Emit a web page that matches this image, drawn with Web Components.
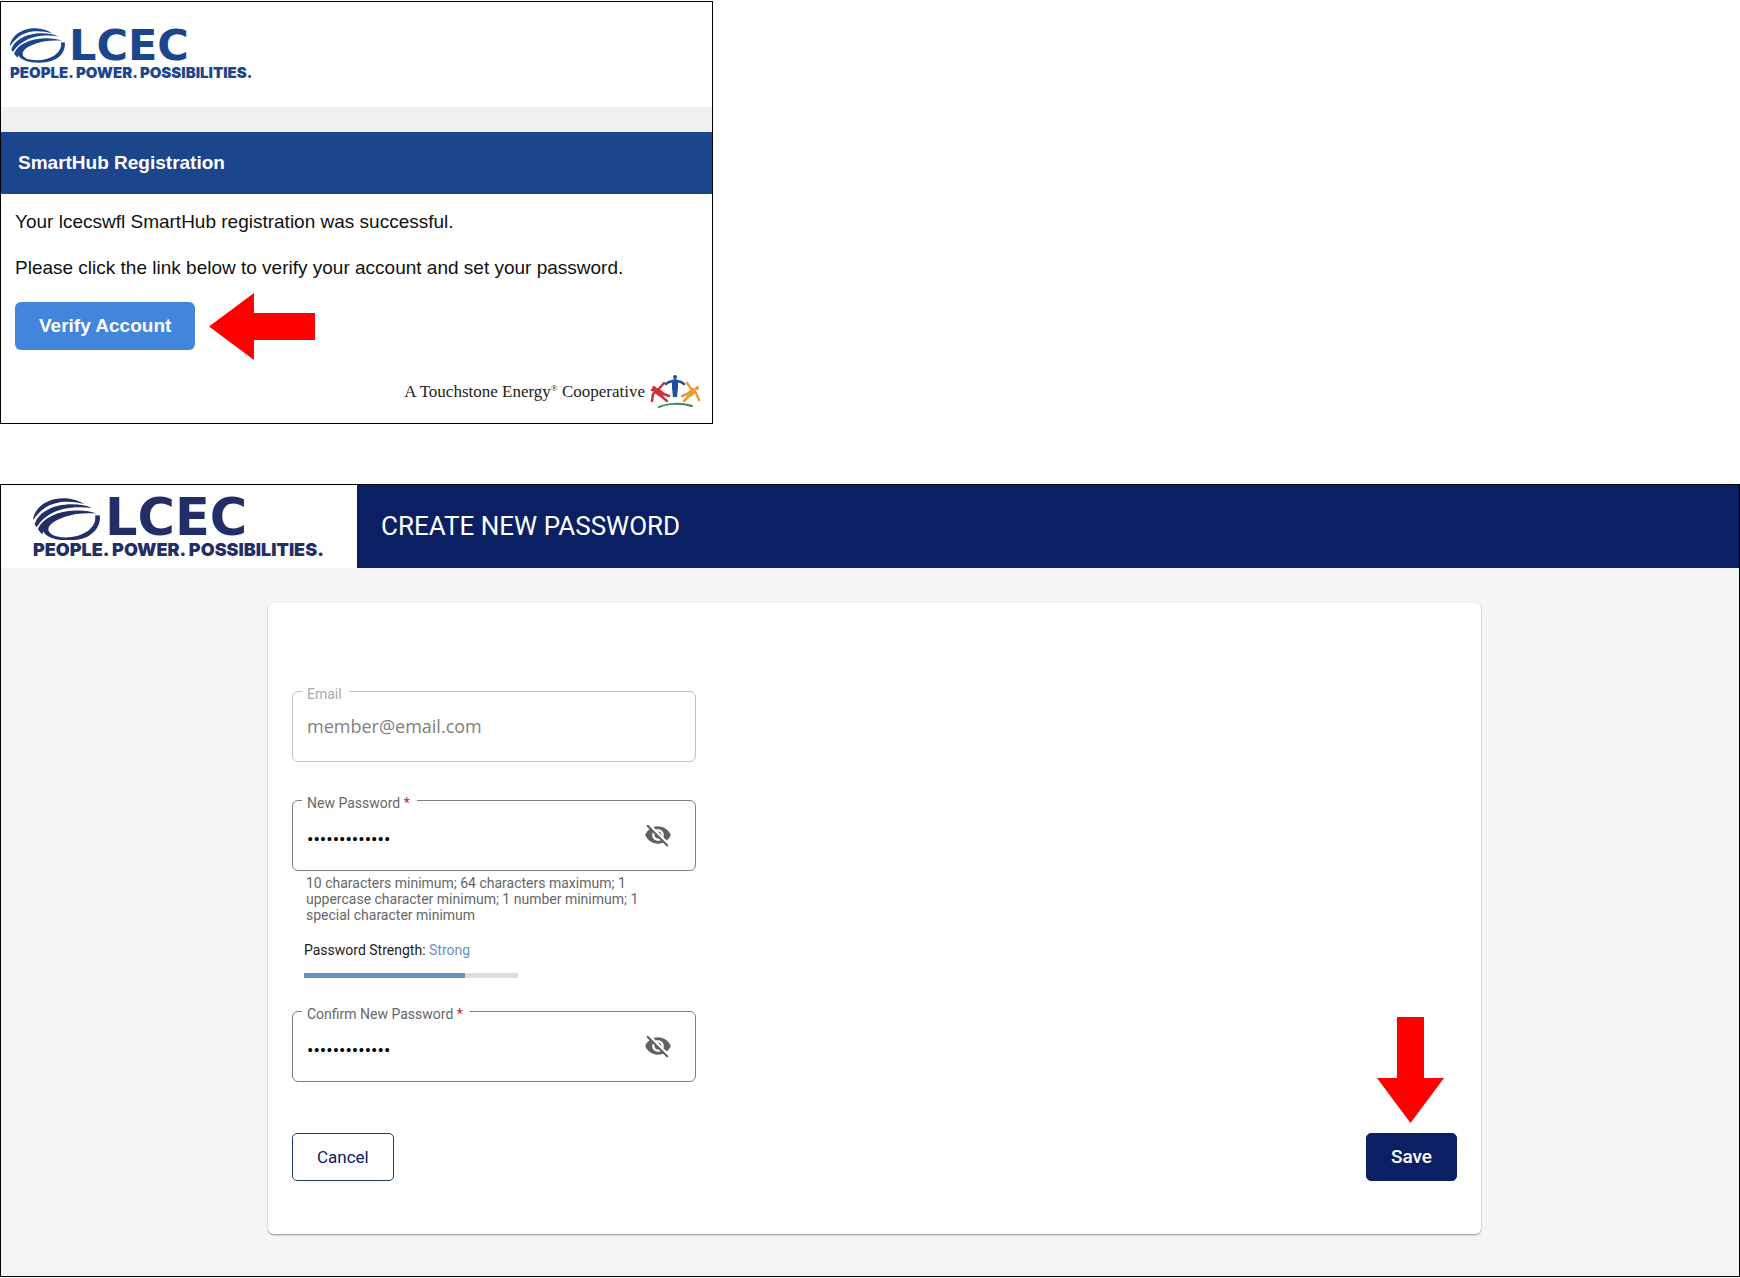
<!DOCTYPE html>
<html lang="en">
<head>
<meta charset="utf-8">
<title>SmartHub Registration</title>
<style>
  * { box-sizing: border-box; }
  body {
    margin: 0;
    padding: 1px 0;
    background: #fff;
    font-family: Roboto, "Liberation Sans", sans-serif;
  }
</style>
</head>
<body>
<smarthub-guide></smarthub-guide>

<script>
const define = (name, html, setup) => {
    const template = document.createElement("template");
    template.innerHTML = `<style>*, :host { box-sizing: border-box; }</style>${html}`;
    customElements.define(
        name,
        class extends HTMLElement {
            constructor() {
                super();
                this.attachShadow({ mode: "open" }).append(template.content.cloneNode(true));
            }
            connectedCallback() {
                if (setup) setup(this, this.shadowRoot);
            }
        }
    );
};

// size="large" is used in the page header, the default one in emails
define("lcec-logo", `
  <style>
    :host { display: block; color: #1c468b; --emblem: 55px; --letters: 43px; --line: 28px; --tag: 15px; --gap: 4px; }
    :host([size="large"]) { color: #232d66; --emblem: 67px; --letters: 51px; --line: 34px; --tag: 18px; --gap: 5px; }
    .mark { display: flex; align-items: flex-end; gap: var(--gap); }
    svg { display: block; width: var(--emblem); fill: currentColor; }
    .letters { font: bold var(--letters)/var(--line) "DejaVu Sans", sans-serif; padding-bottom: var(--gap); }
    .tag { font: 900 var(--tag)/20px Inter, "Liberation Sans", sans-serif; white-space: nowrap; }
  </style>
  <div class="mark">
    <svg viewBox="15 15 202 128" aria-hidden="true">
      <path d="M15 82C18 42 62 14 112 16C138 18 156 25 170 34C144 27 120 25 96 28C58 34 34 54 15 82Z"/>
      <path d="M20 95C30 58 76 34 132 34C158 34 178 38 192 45C162 41 132 42 106 48C70 57 42 76 26 103Z"/>
      <path d="M30 108C46 74 90 55 142 53C168 52 190 56 206 62C174 59 138 62 112 70C76 82 52 98 43 124C37 119 32 114 30 108Z"/>
      <path d="M202 68L216 67C220 92 206 117 180 131C148 147 92 147 62 131C44 121 40 106 48 93C66 76 104 66 140 64C108 71 76 83 64 100C56 114 66 126 88 131C118 138 154 132 178 116C196 103 206 86 202 68Z"/>
    </svg>
    <div class="letters">LCEC</div>
  </div>
  <div class="tag">PEOPLE. POWER. POSSIBILITIES.</div>
`);

define("callout-arrow", `
  <style>
    :host { display: block; width: 106px; height: 67px; }
    :host([direction="down"]) { width: 67px; height: 106px; }
    svg { display: block; width: 100%; height: 100%; fill: #f00; }
  </style>
  <svg aria-hidden="true"><path/></svg>
`, (host, root) => {
    const down = host.getAttribute("direction") === "down";
    root.querySelector("svg").setAttribute("viewBox", down ? "0 0 67 106" : "0 0 106 67");
    root.querySelector("path").setAttribute("d", down
        ? "M20 0H47V61H67L33.5 106L0 61H20Z"
        : "M106 20V47H45V67L0 33.5L45 0V20Z");
});

define("touchstone-mark", `
  <style>
    :host { display: flex; align-items: center; justify-content: flex-end; gap: 5px; color: #222; font: 17px/34px "Liberation Serif", serif; }
    sup { font-size: 9px; line-height: 0; vertical-align: 6px; }
    svg { display: block; width: 50px; height: 34px; fill: none; stroke-linecap: round; stroke-linejoin: round; }
  </style>
  <span>A Touchstone Energy<sup>®</sup> Cooperative</span>
  <svg viewBox="0 0 50 34" aria-hidden="true">
    <g stroke="#1f4f9c" stroke-width="2.500">
      <circle cx="25" cy="2" r="2" fill="#1f4f9c" stroke="none"/>
      <path d="M16 9C19 6 22 6 25 6C28 6 31 6 34 9"/>
      <path d="M25 7V13" stroke-width="6"/>
      <path d="M23.500 13L24 21M26.500 13L26 21"/>
    </g>
    <g stroke="#cb3340" stroke-width="2.500">
      <circle cx="4" cy="13" r="2" fill="#cb3340" stroke="none"/>
      <path d="M14 8L8 15L3 19L2 26"/>
      <path d="M7 16L11 19" stroke-width="6"/>
      <path d="M11 18L19 21M10 20L17 26M2 15L7 16"/>
    </g>
    <g stroke="#eb9b35" stroke-width="2.500">
      <circle cx="47" cy="13" r="2" fill="#eb9b35" stroke="none"/>
      <path d="M37 8L42 15L46 18L49 25"/>
      <path d="M43 16L40 19" stroke-width="6"/>
      <path d="M40 18L32 21M40 20L34 26"/>
    </g>
    <path d="M9 32C18 28 32 28 42 31" stroke="#35885a" stroke-width="2"/>
  </svg>
`);

define("email-message", `
  <style>
    :host { display: block; max-width: 713px; border: 1px solid #000; font: 19px/24px "Liberation Sans", Arial, sans-serif; color: #111; }
    .brand { padding: 26px 9px 24px; }
    .spacer { height: 25px; background: #f0f0f0; }
    h1 { margin: 0; padding: 19px 17px; background: #1c468b; color: #fff; font-size: 19px; line-height: 24px; }
    .body { padding: 16px 14px 0; }
    p { margin: 0 0 22px; }
    .action { display: flex; align-items: center; gap: 14px; margin-top: -9px; }
    a { display: block; padding: 12px 24px; border-radius: 6px; background: #4285db; color: #fff; font-weight: bold; text-decoration: none; white-space: nowrap; }
    footer { padding: 15px 12px 14px; }
  </style>
  <div class="brand"><lcec-logo></lcec-logo></div>
  <div class="spacer"></div>
  <h1>SmartHub Registration</h1>
  <div class="body">
    <p>Your lcecswfl SmartHub registration was successful.</p>
    <p>Please click the link below to verify your account and set your password.</p>
    <div class="action">
      <a href="#password">Verify Account</a>
      <callout-arrow direction="left"></callout-arrow>
    </div>
  </div>
  <footer><touchstone-mark></touchstone-mark></footer>
`);

define("outlined-field", `
  <style>
    :host { display: block; color: #666; --line: #808080; --value: #000; }
    :host([disabled]) { color: #aaa; --line: #c4c4c4; --value: #808080; }
    fieldset { min-width: 0; margin: 0; padding: 0 23px 10px 14px; border: 1px solid var(--line); border-radius: 6px; }
    legend { margin-left: -5px; padding: 4px 7px 0 5px; font-size: 14px; line-height: 16px; }
    .star { color: #c22; }
    .row { display: flex; align-items: center; height: 49px; }
    input { flex: 1; min-width: 0; height: 32px; padding: 0; border: 0; outline: 0; background: none; color: var(--value); font: 18px/32px "Open Sans", sans-serif; }
    input[type="password"] { padding-top: 8px; font: 19px/24px Roboto, sans-serif; }
    button { display: block; padding: 0; border: 0; background: none; color: #616161; cursor: pointer; }
    svg { display: block; width: 28px; height: 28px; fill: currentColor; }
  </style>
  <fieldset>
    <legend><label for="control"><slot></slot><span class="star"> *</span></label></legend>
    <div class="row">
      <input id="control">
      <button type="button" aria-label="Show password">
        <svg viewBox="0 0 24 24" aria-hidden="true"><path d="M12 7c2.760 0 5 2.240 5 5 0 .650-.130 1.260-.360 1.830l2.920 2.920c1.510-1.260 2.700-2.890 3.430-4.750-1.730-4.390-6-7.500-11-7.500-1.400 0-2.740.250-3.980.700l2.160 2.160C10.740 7.130 11.350 7 12 7zM2 4.270l2.280 2.280.460.460C3.080 8.300 1.780 10.020 1 12c1.730 4.390 6 7.500 11 7.500 1.550 0 3.030-.300 4.380-.840l.420.420L19.730 22 21 20.730 3.270 3 2 4.270zM7.530 9.800l1.550 1.550c-.050.210-.080.430-.080.650 0 1.660 1.340 3 3 3 .220 0 .440-.030.650-.080l1.550 1.550c-.670.330-1.410.530-2.200.530-2.760 0-5-2.240-5-5 0-.790.200-1.530.530-2.200zm4.310-.780l3.150 3.150.020-.160c0-1.660-1.340-3-3-3l-.170.010z"/></svg>
      </button>
    </div>
  </fieldset>
`, (host, root) => {
    const input = root.querySelector("input");
    const button = root.querySelector("button");
    const secret = host.getAttribute("type") === "password";
    input.type = host.getAttribute("type") || "text";
    input.value = host.getAttribute("value") || "";
    input.disabled = host.hasAttribute("disabled");
    input.required = host.hasAttribute("required");
    if (!input.required) root.querySelector(".star").remove();
    if (!secret) button.remove();
    button.addEventListener("click", () => {
        input.type = input.type === "password" ? "text" : "password";
    });
});

define("password-strength", `
  <style>
    :host { display: block; width: 214px; color: #212121; font-size: 14px; line-height: 16px; }
    output { color: #6590c8; }
    progress { display: block; appearance: none; width: 100%; height: 5px; margin-top: 15px; border: 0; background: #ddd; }
    progress::-webkit-progress-bar { background: #ddd; }
    progress::-webkit-progress-value { background: #6590c8; }
  </style>
  <label for="bar">Password Strength: <output></output></label>
  <progress id="bar" max="4"></progress>
`, (host, root) => {
    root.querySelector("output").textContent = host.getAttribute("label");
    root.querySelector("progress").value = Number(host.getAttribute("value"));
});

define("action-button", `
  <style>
    :host { display: block; position: relative; }
    button { display: block; height: 48px; padding: 0 24px; border: 1px solid #1e3a6e; border-radius: 5px; background: #fff; color: #0a2063; font: 17px/24px Roboto, sans-serif; cursor: pointer; }
    :host([primary]) button { border-color: #0a2063; background: #0a2063; color: #fff; font-size: 19px; font-weight: 500; }
    ::slotted(callout-arrow) { position: absolute; bottom: calc(100% + 10px); left: calc(50% - 34px); }
  </style>
  <button type="button"><slot></slot></button>
  <slot name="callout"></slot>
`);

define("new-password-page", `
  <style>
    :host { display: block; border: 1px solid #000; background: #f5f5f5; }
    header { display: flex; min-height: 83px; background: #0a2063; color: #fff; }
    .brand { display: flex; align-items: flex-start; width: 356px; padding: 13px 32px 0; background: #fff; }
    h1 { margin: 0; padding: 24px; font-size: 26px; line-height: 34px; font-weight: 400; }
    main { padding: 35px 258px 42px 267px; }
    form { padding: 79px 24px 53px; border-radius: 6px; background: #fff; box-shadow: 0 1px 2px rgba(0, 0, 0, .4); }
    .fields { max-width: 404px; }
    outlined-field + outlined-field { margin-top: 29px; }
    .hint { margin: 4px 14px 19px; color: #666; font-size: 14px; line-height: 16px; }
    password-strength { margin: 0 12px 24px; }
    .actions { display: flex; justify-content: space-between; margin-top: 51px; }
  </style>
  <header>
    <div class="brand"><lcec-logo size="large"></lcec-logo></div>
    <h1>CREATE NEW PASSWORD</h1>
  </header>
  <main>
    <form id="password">
      <div class="fields">
        <outlined-field type="email" value="member@email.com" disabled>Email</outlined-field>
        <outlined-field type="password" value="Sunny-Coast26" required>New Password</outlined-field>
        <p class="hint">10 characters minimum; 64 characters maximum; 1 uppercase character minimum; 1 number minimum; 1 special character minimum</p>
        <password-strength label="Strong" value="3"></password-strength>
        <outlined-field type="password" value="Sunny-Coast26" required>Confirm New Password</outlined-field>
      </div>
      <div class="actions">
        <action-button>Cancel</action-button>
        <action-button primary>Save<callout-arrow slot="callout" direction="down"></callout-arrow></action-button>
      </div>
    </form>
  </main>
`);

define("smarthub-guide", `
  <style>
    :host { display: flex; flex-direction: column; gap: 60px; }
  </style>
  <email-message></email-message>
  <new-password-page></new-password-page>
`);
</script>
</body>
</html>
